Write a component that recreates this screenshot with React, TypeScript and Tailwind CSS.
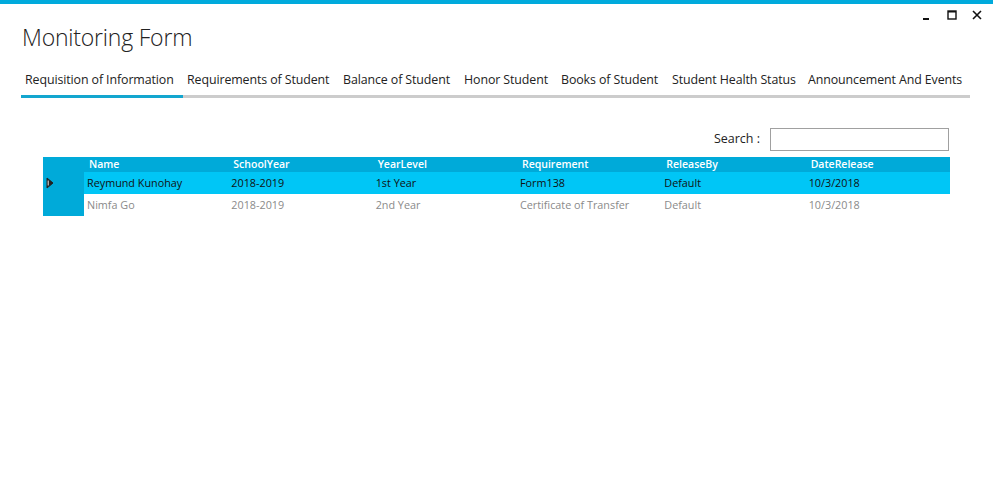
import React from 'react';

const tabs = [
  { label: 'Requisition of Information', w: 'w-[162px]' },
  { label: 'Requirements of Student', w: 'w-[156px]' },
  { label: 'Balance of Student', w: 'w-[121px]' },
  { label: 'Honor Student', w: 'w-[97px]' },
  { label: 'Books of Student', w: 'w-[111px]' },
  { label: 'Student Health Status', w: 'w-[136px]' },
  { label: 'Announcement And Events', w: 'w-[166px]' },
];

const columns = ['Name', 'SchoolYear', 'YearLevel', 'Requirement', 'ReleaseBy', 'DateRelease'];

const rows = [
  ['Reymund Kunohay', '2018-2019', '1st Year', 'Form138', 'Default', '10/3/2018'],
  ['Nimfa Go', '2018-2019', '2nd Year', 'Certificate of Transfer', 'Default', '10/3/2018'],
];

const font = { fontFamily: '"Open Sans", "Noto Sans", sans-serif' };

export default function App() {
  return (
    <div className="w-[993px] h-[487px] bg-white border-t-4 border-[#00aadc] text-[#333]" style={font}>
      {/* title bar */}
      <div className="flex justify-between">
        <h1 className="pl-[22px] pt-[17px] text-[23px] leading-[32px] font-light tracking-[-0.2px] text-[#222]">
          Monitoring Form
        </h1>
        <div className="flex items-start gap-[15px] pr-[11px] pt-[2px]">
          <svg width="10" height="10" viewBox="0 0 10 10" className="mt-[5px]">
            <rect x="1" y="7" width="6" height="2" fill="#111" />
          </svg>
          <svg width="10" height="10" viewBox="0 0 10 10" className="mt-[4px]">
            <rect x="1" y="1" width="8" height="8" fill="none" stroke="#111" strokeWidth="1.4" />
            <rect x="1" y="1" width="8" height="1.5" fill="#111" />
          </svg>
          <svg width="10" height="10" viewBox="0 0 10 10" className="mt-[4px]">
            <path d="M1 1 L9 9 M9 1 L1 9" stroke="#111" strokeWidth="1.6" />
          </svg>
        </div>
      </div>

      {/* tabs */}
      <div className="ml-[21px] mt-[18px] flex w-[949px] border-b-[3px] border-[#cccccc]">
        {tabs.map((t, i) => (
          <div
            key={t.label}
            className={`${t.w} shrink-0 whitespace-nowrap pl-[4px] pb-[6px] text-[12.4px] tracking-[-0.1px] leading-[18px] text-[#222] ${
              i === 0 ? '-mb-[3px] border-b-[3px] border-[#13a6cf]' : ''
            }`}
          >
            {t.label}
          </div>
        ))}
      </div>

      {/* search */}
      <div className="mt-[30px] flex items-center justify-end pr-[44px]">
        <span className="mr-[10px] text-[12.5px] text-[#222]">Search :</span>
        <input className="h-[23px] w-[179px] border border-[#a0a0a0] bg-white outline-none" />
      </div>

      {/* grid */}
      <div className="ml-[43px] mt-[6px] w-[907px] text-[10.8px]">
        <div className="flex h-[15px] bg-[#00aad9] text-white">
          <div className="w-[41px] shrink-0" />
          <div className="grid flex-1 grid-cols-6">
            {columns.map((c) => (
              <div key={c} className="pl-[5px] text-[10.5px] leading-[15px] font-semibold">
                {c}
              </div>
            ))}
          </div>
        </div>
        {rows.map((r, i) => (
          <div key={i} className={`flex h-[22px] ${i === 0 ? 'bg-[#00c6f6] text-[#111]' : 'text-[#8a8a8a]'}`}>
            <div className="flex w-[41px] shrink-0 items-center bg-[#00aad9] pl-[3px]">
              {i === 0 && (
                <svg width="8" height="12" viewBox="0 0 8 12">
                  <path d="M1 1 L7 6 L1 11 Z" fill="#222" stroke="#222" strokeWidth="1" strokeLinejoin="round" />
                  <path d="M2.2 3.5 L2.2 8.5" stroke="#fff" strokeWidth="0.9" />
                </svg>
              )}
            </div>
            <div className="grid flex-1 grid-cols-6">
              {r.map((cell, j) => (
                <div key={j} className="pl-[3px] leading-[22px] whitespace-nowrap">
                  {cell}
                </div>
              ))}
            </div>
          </div>
        ))}
      </div>
    </div>
  );
}
